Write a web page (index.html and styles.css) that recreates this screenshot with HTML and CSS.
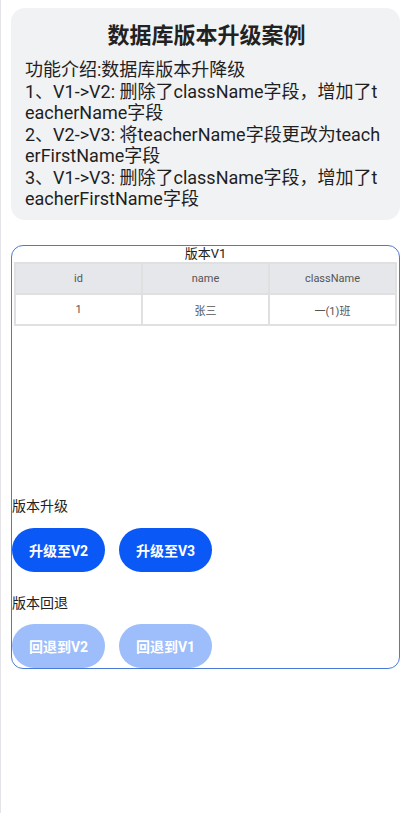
FILE: index.html
```html
<!DOCTYPE html>
<html lang="zh">
<head>
<meta charset="utf-8">
<title>数据库版本升级案例</title>
<link rel="stylesheet" href="styles.css">
</head>
<body>
<div class="page">
  <section class="intro">
    <h1 class="intro-title">数据库版本升级案例</h1>
    <p class="intro-text">功能介绍:数据库版本升降级<br>1、V1-&gt;V2: 删除了className字段，增加了t<br>eacherName字段<br>2、V2-&gt;V3: 将teacherName字段更改为teach<br>erFirstName字段<br>3、V1-&gt;V3: 删除了className字段，增加了t<br>eacherFirstName字段</p>
  </section>

  <section class="panel">
    <div class="panel-title">版本V1</div>
    <table class="data-table">
      <thead>
        <tr><th>id</th><th>name</th><th>className</th></tr>
      </thead>
      <tbody>
        <tr><td>1</td><td>张三</td><td>一(1)班</td></tr>
      </tbody>
    </table>
    <div class="actions">
      <div class="label label-up">版本升级</div>
      <div class="btn-row">
        <button class="btn">升级至V2</button>
        <button class="btn">升级至V3</button>
      </div>
      <div class="label label-down">版本回退</div>
      <div class="btn-row">
        <button class="btn btn-disabled">回退到V2</button>
        <button class="btn btn-disabled">回退到V1</button>
      </div>
    </div>
  </section>
</div>
</body>
</html>
```

FILE: styles.css
```css
html, body {
  margin: 0;
  padding: 0;
  background: #ffffff;
}
body {
  font-family: Roboto, "Noto Sans CJK SC", sans-serif;
  color: #1a1a1a;
  min-height: 813px;
  box-sizing: border-box;
  border-left: 1px solid #e4e4e8;
}
.page {
  padding: 8px 11px 0 10px;
}
.intro {
  background: #f1f2f4;
  border-radius: 14px;
  padding: 10px 12px 10px 14px;
  height: 212px;
  box-sizing: border-box;
}
.intro-title {
  margin: 0;
  font-family: "Noto Sans CJK SC", sans-serif;
  font-size: 22px;
  line-height: 30px;
  font-weight: 700;
  text-align: center;
  color: #222;
}
.intro-text {
  margin: 11px 0 0;
  font-size: 18px;
  line-height: 21.5px;
  color: #1f1f1f;
  white-space: nowrap;
}
.panel {
  margin-top: 25px;
  height: 424px;
  box-sizing: border-box;
  border: 1px solid #4a7ad6;
  border-radius: 12px;
  display: flex;
  flex-direction: column;
  padding: 0;
}
.panel-title {
  font-size: 13px;
  line-height: 16px;
  text-align: center;
  color: #222;
}
.data-table {
  margin: 0 2px 0 2px;
  border-collapse: collapse;
  table-layout: fixed;
  width: calc(100% - 4px);
  font-size: 11px;
  color: #555;
}
.data-table th,
.data-table td {
  border: 2px solid #e0e0e0;
  height: 29px;
  text-align: center;
  font-weight: 400;
  padding: 0;
}
.data-table th {
  background: #e6e7eb;
}
.actions {
  margin-top: auto;
  display: flex;
  flex-direction: column;
}
.label {
  font-size: 14px;
  line-height: 20px;
  color: #222;
}
.label-up {
  margin-bottom: 12px;
}
.label-down {
  margin-top: 21px;
  margin-bottom: 11px;
}
.btn-row {
  display: flex;
  gap: 14px;
}
.btn {
  width: 93px;
  height: 44px;
  border: none;
  border-radius: 22px;
  background: #0a59f7;
  color: #fff;
  font-family: Roboto, "Noto Sans CJK SC", sans-serif;
  font-size: 14px;
  font-weight: 700;
  padding: 0;
}
.btn-disabled {
  background: #9dbdfb;
}
```
